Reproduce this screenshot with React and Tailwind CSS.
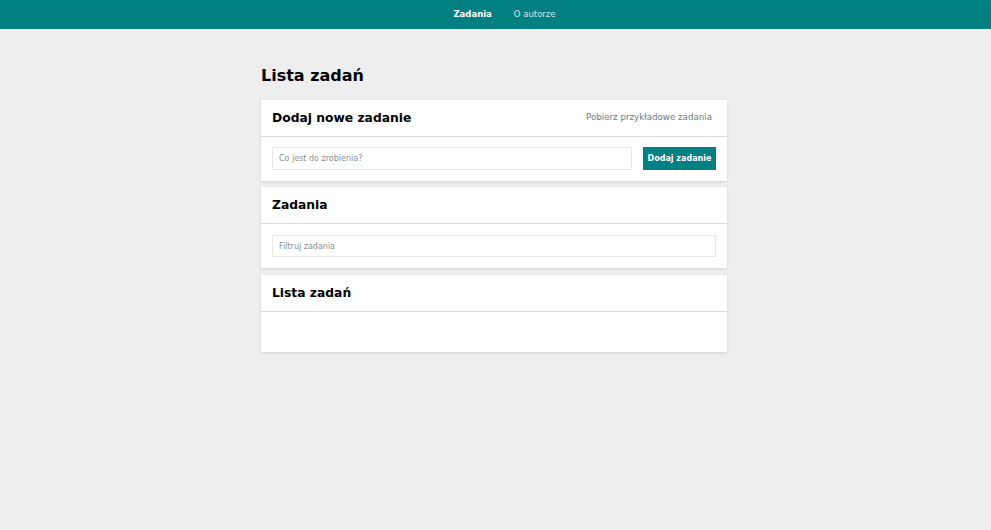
export default function App() {
  return (
    <div className="min-h-[530px] bg-[#eeeeee] font-['DejaVu_Sans',sans-serif] text-black">
      <nav className="flex h-[29px] items-center justify-center gap-[22px] bg-[#008080] pl-[18px] text-[8.5px]">
        <span className="font-bold text-white">Zadania</span>
        <span className="text-white/80">O autorze</span>
      </nav>

      <main className="ml-[261px] w-[466px] pt-[37px]">
        <h1 className="mb-[14px] text-[16px] font-bold leading-[20px]">Lista zadań</h1>

        <section className="mb-[6px] bg-white shadow-[0_1px_3px_rgba(0,0,0,0.12)]">
          <div className="flex h-[37px] items-center justify-between border-b border-[#dddddd] pl-[11px] pr-[15px]">
            <h2 className="text-[12.3px] font-bold">Dodaj nowe zadanie</h2>
            <span className="text-[8.7px] text-[#6b7d85]">Pobierz przykładowe zadania</span>
          </div>
          <div className="flex gap-[11px] px-[11px] pb-[11px] pt-[10px]">
            <input
              className="block h-[23px] flex-1 border border-[#e8e8e8] px-[6px] text-[8px] outline-none placeholder:text-[#8a8f93]"
              placeholder="Co jest do zrobienia?"
            />
            <button className="h-[23px] w-[73px] bg-[#008080] text-[8px] font-semibold text-white">Dodaj zadanie</button>
          </div>
        </section>

        <section className="mb-[7px] bg-white shadow-[0_1px_3px_rgba(0,0,0,0.12)]">
          <div className="flex h-[37px] items-center border-b border-[#dddddd] px-[11px]">
            <h2 className="text-[12.3px] font-bold">Zadania</h2>
          </div>
          <div className="px-[11px] pb-[11px] pt-[11px]">
            <input
              className="block h-[22px] w-full border border-[#e8e8e8] px-[6px] text-[8px] outline-none placeholder:text-[#8a8f93]"
              placeholder="Filtruj zadania"
            />
          </div>
        </section>

        <section className="bg-white shadow-[0_1px_3px_rgba(0,0,0,0.12)]">
          <div className="flex h-[37px] items-center border-b border-[#dddddd] px-[11px]">
            <h2 className="text-[12.3px] font-bold">Lista zadań</h2>
          </div>
          <div className="h-[40px]" />
        </section>
      </main>
    </div>
  );
}
